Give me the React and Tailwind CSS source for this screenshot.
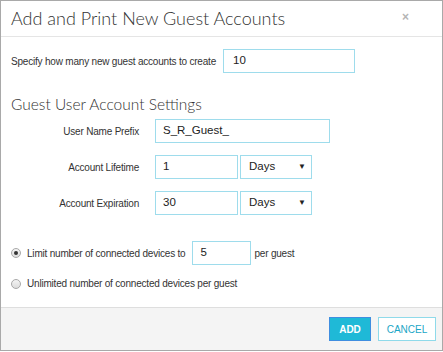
import React, { useState } from "react";

const Field = ({ value, className = "" }) => (
  <div
    className={
      "h-[24px] border border-[#9edcec] bg-white flex items-center px-[7px] text-[11.5px] text-[#222] " +
      className
    }
  >
    {value}
  </div>
);

const Select = ({ value }) => (
  <div className="h-[24px] w-[72px] border border-[#9edcec] bg-white flex items-center justify-between pl-[8px] pr-[5px] text-[11.5px] text-[#222]">
    <span>{value}</span>
    <span className="text-[8px] leading-none text-[#222]">▼</span>
  </div>
);

const Row = ({ label, children }) => (
  <div className="flex items-center">
    <div className="w-[154px] text-right text-[10px] tracking-[-0.2px] text-[#333] pr-[16px]">{label}</div>
    <div className="flex gap-[2px]">{children}</div>
  </div>
);

const Radio = ({ checked }) => (
  <div className="w-[10px] h-[10px] rounded-full border border-[#a8a8a8] bg-gradient-to-b from-[#f4f4f4] to-[#dcdcdc] flex items-center justify-center">
    {checked && <div className="w-[4px] h-[4px] rounded-full bg-[#333]" />}
  </div>
);

export default function App() {
  const [limit] = useState(true);

  return (
    <div className="w-[443px] h-[351px] border border-[#a9a9a9] bg-white flex flex-col font-['Liberation_Sans',Arial,sans-serif]">
      {/* Header */}
      <div className="h-[36px] flex items-start justify-between border-b border-[#e5e5e5] pl-[10px] pr-[33px] pt-[6px]">
        <h1 className="font-['Lato',sans-serif] font-light text-[18px] leading-[22px] text-[#333]">
          Add and Print New Guest Accounts
        </h1>
        <span className="text-[12px] leading-[14px] text-[#b5b5b5] font-bold mt-[3px]">×</span>
      </div>

      {/* Body */}
      <div className="flex-1 flex flex-col px-[10px]">
        <div className="flex items-center mt-[12px]">
          <span className="text-[10px] tracking-[-0.2px] text-[#333] w-[212px] whitespace-nowrap">
            Specify how many new guest accounts to create
          </span>
          <Field value="10" className="w-[132px] h-[23px] px-[9px]" />
        </div>

        <h2 className="font-['Lato',sans-serif] font-light text-[15.5px] text-[#333] mt-[21px] leading-[20px]">
          Guest User Account Settings
        </h2>

        <div className="flex flex-col gap-[12px] mt-[5px] -ml-[10px]">
          <Row label="User Name Prefix">
            <Field value="S_R_Guest_" className="w-[175px]" />
          </Row>
          <Row label="Account Lifetime">
            <Field value="1" className="w-[83px]" />
            <Select value="Days" />
          </Row>
          <Row label="Account Expiration">
            <Field value="30" className="w-[83px]" />
            <Select value="Days" />
          </Row>
        </div>

        <div className="flex items-center mt-[26px]">
          <Radio checked={limit} />
          <span className="ml-[6px] text-[10px] tracking-[-0.2px] text-[#333]">Limit number of connected devices to</span>
          <Field value="5" className="w-[59px] h-[23px] ml-[7px]" />
          <span className="ml-[3px] text-[10px] tracking-[-0.2px] text-[#333]">per guest</span>
        </div>

        <div className="flex items-center mt-[13px] leading-[12px]">
          <Radio checked={!limit} />
          <span className="ml-[6px] text-[10px] tracking-[-0.2px] text-[#333]">
            Unlimited number of connected devices per guest
          </span>
        </div>
      </div>

      {/* Footer */}
      <div className="h-[43px] border-t border-[#dedede] bg-[#f4f4f4] flex items-center justify-end gap-[7px] pr-[6px]">
        <button className="w-[42px] h-[24px] bg-[#1fb9d7] border border-[#3f8ee0] text-white font-bold text-[10px]">
          ADD
        </button>
        <button className="w-[58px] h-[24px] bg-white border border-[#8fdaea] text-[#1aa6c6] text-[10px]">
          CANCEL
        </button>
      </div>
    </div>
  );
}
